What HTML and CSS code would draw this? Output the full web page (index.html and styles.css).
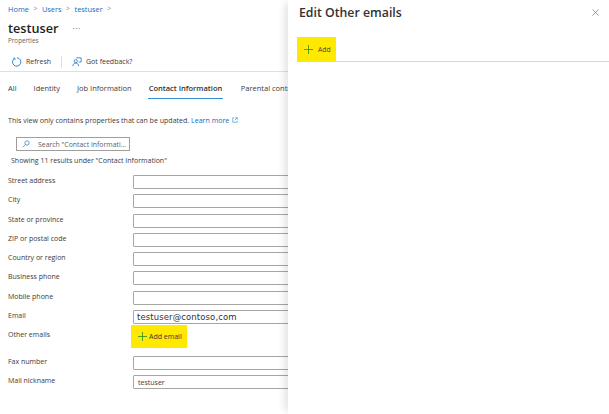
FILE: index.html
```html
<!DOCTYPE html>
<html lang="en">
<head>
<meta charset="utf-8">
<title>Edit Other emails</title>
<link rel="stylesheet" href="styles.css">
</head>
<body>
<div class="page">
  <main class="main">
    <nav class="crumbs">
      <a>Home</a><span class="sep">&gt;</span><a>Users</a><span class="sep">&gt;</span><a>testuser</a><span class="sep">&gt;</span>
    </nav>
    <div class="title-row"><h1>testuser</h1><span class="dots">···</span></div>
    <div class="subtitle">Properties</div>
    <div class="toolbar">
      <svg class="tool-icon" viewBox="0 0 12 12"><path d="M3.2 1.6A5 5 0 1 0 6 1" fill="none" stroke="#0f6cbd" stroke-width="1"/><path d="M1.4 1.4h2.2v2.2" fill="none" stroke="#0f6cbd" stroke-width=".8"/></svg>
      <span class="tool-label">Refresh</span>
      <span class="tool-sep"></span>
      <svg class="tool-icon" viewBox="0 0 12 12"><path d="M5 1h6v5H8" fill="none" stroke="#0f6cbd" stroke-width=".9"/><circle cx="4.5" cy="5" r="1.9" fill="none" stroke="#0f6cbd" stroke-width=".9"/><path d="M1 11c.3-2.6 1.6-3.6 3.5-3.6S7.700 8.400 8 11" fill="none" stroke="#0f6cbd" stroke-width=".9"/></svg>
      <span class="tool-label">Got feedback?</span>
    </div>
    <div class="tabs">
      <span class="tab">All</span>
      <span class="tab">Identity</span>
      <span class="tab">Job Information</span>
      <span class="tab active">Contact Information</span>
      <span class="tab tab-last">Parental controls</span>
    </div>
    <p class="note">This view only contains properties that can be updated. <a>Learn more</a>
      <svg class="ext" viewBox="0 0 8 8"><path d="M3 1H1v6h6V5M4.500 1H7v2.500M7 1 3.800 4.200" fill="none" stroke="#0f6cbd" stroke-width=".7"/></svg></p>
    <div class="search">
      <svg class="search-icon" viewBox="0 0 10 10"><circle cx="6.300" cy="3.700" r="2.700" fill="none" stroke="#0f6cbd" stroke-width=".8"/><path d="M4.300 5.700 1 9" stroke="#0f6cbd" stroke-width=".8"/></svg>
      <span>Search "Contact Informati...</span>
    </div>
    <div class="results">Showing 11 results under "Contact Information"</div>
    <div class="form">
      <label>Street address</label><div class="field"></div>
      <label>City</label><div class="field"></div>
      <label>State or province</label><div class="field"></div>
      <label>ZIP or postal code</label><div class="field"></div>
      <label>Country or region</label><div class="field"></div>
      <label>Business phone</label><div class="field"></div>
      <label>Mobile phone</label><div class="field"></div>
      <label>Email</label><div class="field field-email">testuser@contoso,com</div>
      <label>Other emails</label>
      <div class="add-email">
        <svg class="plus" viewBox="0 0 10 10"><path d="M5 0v10M0 5h10" stroke="#3f9b1c" stroke-width="1"/></svg>
        <span>Add email</span>
      </div>
      <label>Fax number</label><div class="field"></div>
      <label>Mail nickname</label><div class="field field-nick">testuser</div>
    </div>
  </main>
  <aside class="panel">
    <header class="panel-head">
      <h2>Edit Other emails</h2>
      <svg class="close" viewBox="0 0 8 8"><path d="M.5.5l7 7M7.500.5l-7 7" stroke="#777" stroke-width=".8"/></svg>
    </header>
    <div class="panel-bar">
      <div class="add">
        <svg class="plus" viewBox="0 0 10 10"><path d="M5 0v10M0 5h10" stroke="#3f9b1c" stroke-width="1"/></svg>
        <span>Add</span>
      </div>
    </div>
  </aside>
</div>
</body>
</html>
```
FILE: styles.css
```css
* { box-sizing: border-box; }
html, body { margin: 0; padding: 0; }
body {
  width: 609px;
  height: 414px;
  overflow: hidden;
  background: #fff;
  font-family: "Open Sans", "Noto Sans", "Liberation Sans", sans-serif;
  color: #3b3a39;
}
.page { display: flex; height: 414px; }
.main { width: 288px; flex: none; overflow: hidden; padding: 3px 0 0 8px; white-space: nowrap; }
.crumbs { display: flex; align-items: center; gap: 4.500px; font-size: 7.400px; line-height: 12px; color: #0f6cbd; }
.sep { color: #8a8886; font-size: 7px; }
.title-row { display: flex; align-items: center; gap: 14px; margin-top: 4px; height: 18px; }
h1 { margin: 0; font-size: 12.700px; font-weight: 600; color: #201f1e; line-height: 18px; }
.dots { font-size: 9px; letter-spacing: .4px; color: #777; }
.subtitle { font-size: 6.300px; line-height: 10px; color: #666; margin-top: -1px; }
.toolbar { display: flex; align-items: center; height: 18px; margin-top: 7px; padding-left: 4px; padding-bottom: 1px; font-size: 7px; }
.tool-icon { width: 10px; height: 10px; flex: none; }
.tool-label { margin-left: 4px; }
.tool-sep { width: 1px; height: 12px; background: #e1dfdd; margin: 0 10px; }
.tabs { display: flex; gap: 17px; height: 28px; margin: 0 0 0 -8px; padding: 8px 0 0 8px; border-top: 1px solid #e1dfdd; font-size: 7.500px; line-height: 17px; }
.tab { height: 19px; }
.tab.active { font-weight: 600; color: #323130; border-bottom: 1.500px solid #2f8fdb; margin: 0 -1px; padding: 0 1px; }
.tab-last { margin-left: 1.500px; }
.note { margin: 15.500px 0 0; font-size: 7.050px; line-height: 11px; }
.note a { color: #0f6cbd; }
.ext { width: 6px; height: 6px; margin-left: 1px; }
.search { display: flex; align-items: center; gap: 8px; width: 114px; height: 14px; margin: 11.500px 0 0 8px; padding-left: 5px; border: 1px solid #a19f9d; font-size: 6.900px; color: #605e5c; }
.search-icon { width: 8px; height: 8px; flex: none; }
.results { margin: 3.500px 0 0 3px; font-size: 7px; line-height: 11px; }
.form { display: grid; grid-template-columns: 125px 1fr; row-gap: 5.300px; margin-top: 9.500px; font-size: 7px; }
.form label { line-height: 11px; }
.field { height: 14px; width: 170px; border: 1px solid #a8a6a4; border-radius: 1px; display: flex; align-items: center; }
.field-email { padding-left: 3px; letter-spacing: .1px; color: #333; font-family: "DejaVu Sans", sans-serif; font-size: 8.500px; }
.field-nick { padding-left: 4px; }
.add-email { display: flex; align-items: center; gap: 2px; width: 56px; height: 23px; margin: -4px 0 2.400px -2px; padding-left: 7px; background: #ffe900; font-size: 7px; color: #333; }
.plus { width: 9px; height: 9px; flex: none; }
.panel { width: 321px; flex: none; height: 414px; padding: 0 11px; background: #fff; box-shadow: -6px 0 8px -3px rgba(0,0,0,.12); }
.panel-head { display: flex; align-items: center; justify-content: space-between; height: 25px; }
h2 { margin: 0; font-size: 12.300px; font-weight: 600; color: #323130; }
.close { width: 7px; height: 7px; margin-right: -1px; }
.panel-bar { height: 37px; padding-top: 12px; border-bottom: 1px solid #d6d6d6; margin-right: -11px; }
.add { display: flex; align-items: center; gap: 5px; width: 39px; height: 25px; margin-left: -2px; padding-left: 7px; background: #ffe900; font-size: 6.800px; color: #444; }
```
